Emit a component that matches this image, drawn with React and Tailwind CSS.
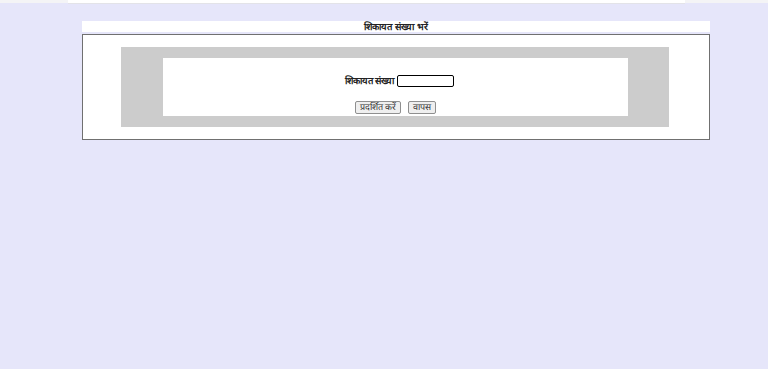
export default function App() {
  return (
    <div className="min-h-[369px] w-full bg-[#e6e6fa] font-['Liberation_Sans',sans-serif] text-black">
      <div className="flex h-[3px] bg-[#f4f4f6]">
        <div className="ml-[68px] w-[617px] bg-white shadow-[0_1px_0_#e3e3e8]" />
      </div>
      <div className="ml-[82px] w-[628px] pt-[18px]">
        <div className="flex h-[11px] items-center justify-center bg-white text-[9.5px] font-bold leading-none text-[#222]">
          शिकायत संख्या भरें
        </div>
        <div className="mt-[2px] h-[106px] border border-[#707070] bg-white pl-[38px] pr-[40px] pt-[12px]">
          <div className="h-[80px] bg-[#cccccc] pb-[11px] pl-[42px] pr-[41px] pt-[11px]">
            <div className="flex h-[58px] flex-col items-center bg-white pt-[17px]">
              <div className="ml-[8px] flex items-center gap-[3px]">
                <label className="text-[9.5px] font-bold leading-none text-[#222]">शिकायत संख्या</label>
                <input
                  type="text"
                  className="h-[12px] w-[57px] rounded-[2px] border border-black bg-white outline-none"
                />
              </div>
              <div className="mt-[14px] flex gap-[7px]">
                <button className="h-[13px] rounded-[2px] border border-[#8f8f8f] bg-[#efefef] px-[4px] text-[9px] leading-none text-[#333]">
                  प्रदर्शित करें
                </button>
                <button className="h-[13px] rounded-[2px] border border-[#8f8f8f] bg-[#efefef] px-[4px] text-[9px] leading-none text-[#333]">
                  वापस
                </button>
              </div>
            </div>
          </div>
        </div>
      </div>
    </div>
  );
}
